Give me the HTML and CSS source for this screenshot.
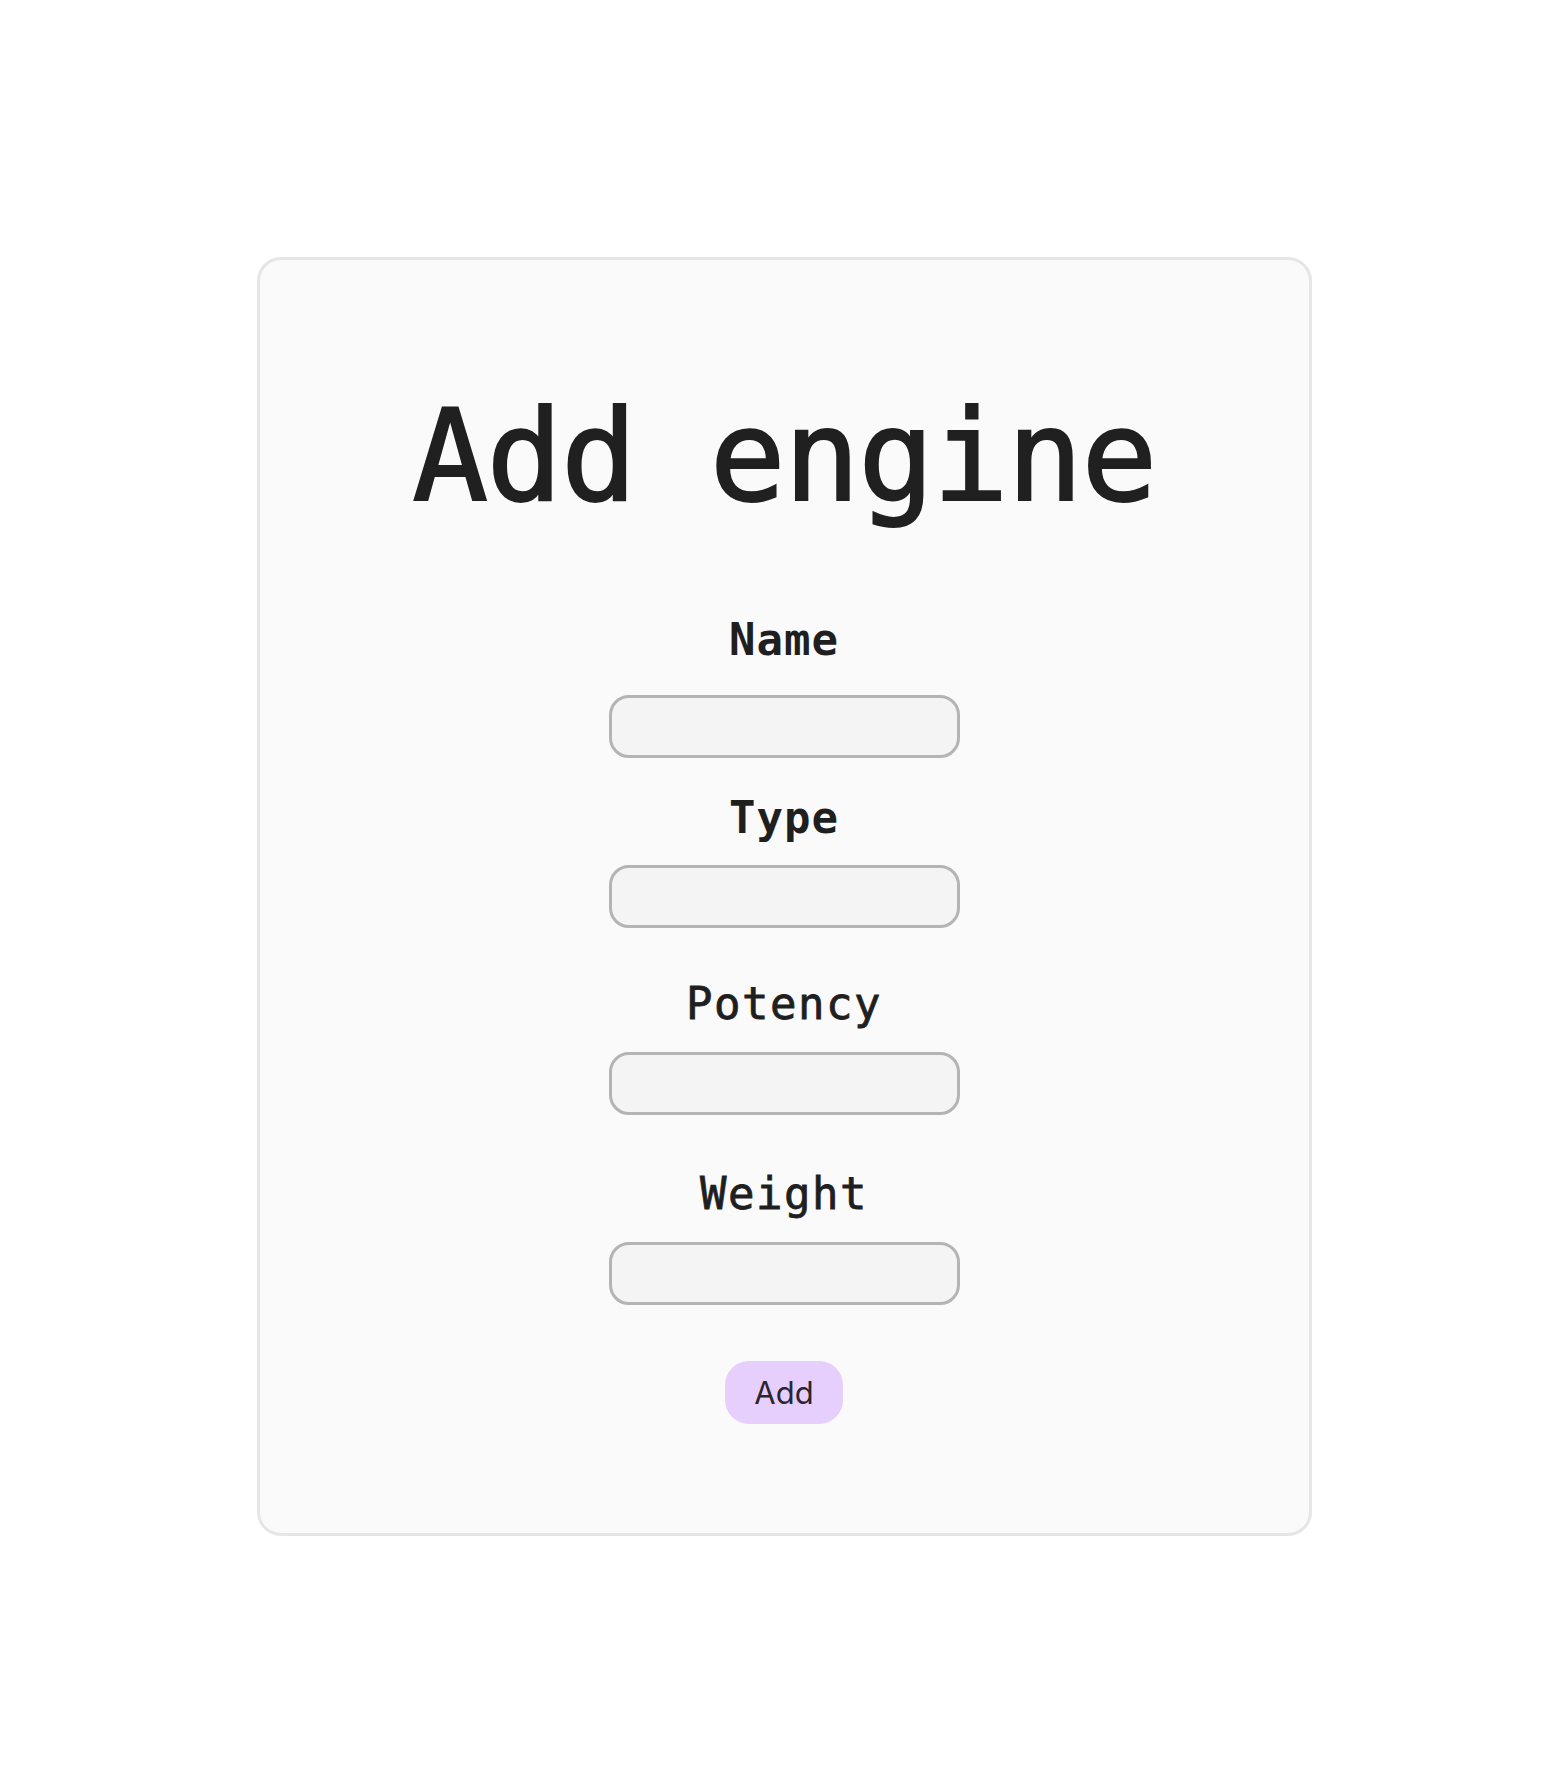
FILE: index.html
```html
<!DOCTYPE html>
<html lang="en">
<head>
<meta charset="utf-8">
<title>Add engine</title>
<link rel="stylesheet" href="styles.css">
</head>
<body>
<main class="page">
  <form class="card">
    <h1 class="title">Add engine</h1>
    <label class="label label-name" for="name">Name</label>
    <input class="field field-first" id="name" type="text">
    <label class="label label-type" for="type">Type</label>
    <input class="field" id="type" type="text">
    <label class="label label-potency" for="potency">Potency</label>
    <input class="field" id="potency" type="text">
    <label class="label label-weight" for="weight">Weight</label>
    <input class="field" id="weight" type="text">
    <button class="add-btn" type="button">Add</button>
  </form>
</main>
</body>
</html>
```

FILE: styles.css
```css
* { box-sizing: border-box; }

html, body {
  margin: 0;
  padding: 0;
  background: #ffffff;
}

.page {
  min-height: 1792px;
  display: flex;
  align-items: center;
  justify-content: center;
}

.card {
  width: 1055px;
  height: 1279px;
  background: #fafafa;
  border: 3px solid #e6e6e6;
  border-radius: 24px;
  display: flex;
  flex-direction: column;
  align-items: center;
  padding-top: 133px;
}

.title {
  margin: 0;
  font-family: "DejaVu Sans Mono", "Liberation Mono", monospace;
  font-size: 126px;
  line-height: 128px;
  font-weight: 400;
  color: #202020;
  letter-spacing: -1.5px;
  -webkit-text-stroke: 2px #202020;
}

.label {
  display: block;
  font-family: "DejaVu Sans Mono", "Liberation Mono", monospace;
  font-size: 44px;
  line-height: 45px;
  color: #1f1f1f;
  letter-spacing: 1px;
}

.label-name { margin-top: 96px; margin-bottom: 33px; font-weight: 700; }
.label-type { margin-top: 37px; margin-bottom: 25px; font-weight: 700; }
.label-potency { margin-top: 53px; margin-bottom: 26px; font-weight: 400; letter-spacing: 1.5px; -webkit-text-stroke: 0.8px #1f1f1f; }
.label-weight { margin-top: 56px; margin-bottom: 26px; font-weight: 400; letter-spacing: 1.5px; -webkit-text-stroke: 0.8px #1f1f1f; }

.field {
  display: block;
  width: 351px;
  height: 63px;
  margin: 0;
  background: #f4f4f4;
  border: 3px solid #b4b4b4;
  border-radius: 20px;
  outline: none;
}

.add-btn {
  margin-top: 56px;
  height: 63px;
  padding: 0 29px;
  border: none;
  border-radius: 24px;
  background: #e6cffc;
  color: #2b2530;
  font-family: Inter, "Noto Sans", sans-serif;
  font-size: 31px;
  font-weight: 400;
  cursor: pointer;
}
```
